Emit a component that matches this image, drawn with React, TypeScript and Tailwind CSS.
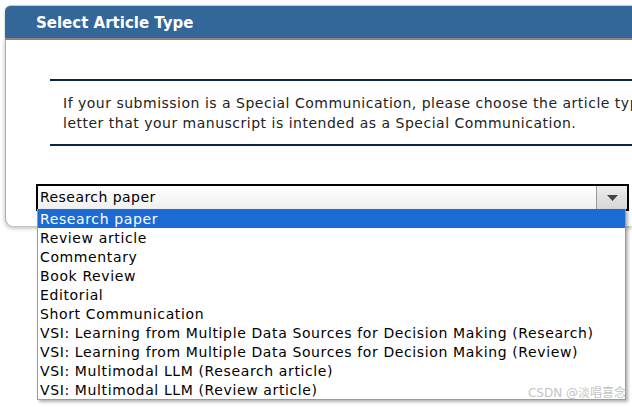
import React from "react";

const options = [
  "Research paper",
  "Review article",
  "Commentary",
  "Book Review",
  "Editorial",
  "Short Communication",
  "VSI: Learning from Multiple Data Sources for Decision Making (Research)",
  "VSI: Learning from Multiple Data Sources for Decision Making (Review)",
  "VSI: Multimodal LLM (Research article)",
  "VSI: Multimodal LLM (Review article)",
];

export default function App() {
  const selected = 0;

  return (
    <div
      className="relative w-[632px] h-[407px] overflow-hidden bg-white"
      style={{ fontFamily: '"DejaVu Sans", Verdana, sans-serif' }}
    >
      <div className="pt-[5px] pl-[5px]">
        {/* header bar */}
        <div className="h-[35px] bg-[#336699] rounded-tl-[6px] border-t border-[#c8c8c8] border-b-2 border-b-[#8a8a8a] shadow-[0_2px_3px_rgba(0,0,0,0.25)] flex items-center pl-[31px] pt-[3px]">
          <span className="text-white font-bold text-[15px]">Select Article Type</span>
        </div>

        {/* panel body */}
        <div className="h-[186px] border-l border-[#b0b0b0] rounded-bl-[8px] shadow-[0_2px_4px_rgba(0,0,0,0.3)] bg-white pt-[39px]">
          <div className="ml-[44px] border-t-2 border-b-2 border-[#0d2544] pt-[12px] pb-[11px] pl-[13px]">
            <p className="text-[14px] leading-[20px] text-[#222] whitespace-nowrap tracking-[0.5px]">
              If your submission is a Special Communication, please choose the article type and indicate in your cover
              <br />
              letter that your manuscript is intended as a Special Communication.
            </p>
          </div>

          {/* select */}
          <div className="mt-[38px] ml-[30px] w-[593px] h-[27px] border-2 border-black flex bg-gradient-to-b from-white to-[#f0f0f0]">
            <div className="flex-1 flex items-center pl-[2px] text-[14px] text-black tracking-[0.45px]">{options[selected]}</div>
            <div className="w-[31px] border-l border-[#9a9a9a] bg-gradient-to-b from-[#ececec] to-[#d6d6d6] flex items-center justify-center">
              <svg width="11" height="6" viewBox="0 0 11 6">
                <path d="M0 0 H11 L5.5 6 Z" fill="#444" />
              </svg>
            </div>
          </div>
        </div>
      </div>

      {/* dropdown list */}
      <div className="absolute left-[37px] top-[209px] w-[589px] bg-white border border-[#9a9a9a] border-t-0 shadow-[2px_2px_3px_rgba(0,0,0,0.3)]">
        {options.map((o, i) => (
          <div
            key={o}
            className={
              "h-[19px] leading-[19px] pl-[2px] pt-[1px] text-[14px] whitespace-nowrap tracking-[0.62px] " +
              (i === selected ? "bg-[#1c6bd4] text-white" : "text-black")
            }
          >
            {o}
          </div>
        ))}
      </div>

      <div
        className="absolute right-[6px] bottom-[5px] text-[12px] text-[#c4c4c4]"
        style={{ fontFamily: '"DejaVu Sans", "Noto Sans CJK SC", sans-serif' }}
      >
        CSDN @淡唱喜念
      </div>
    </div>
  );
}
